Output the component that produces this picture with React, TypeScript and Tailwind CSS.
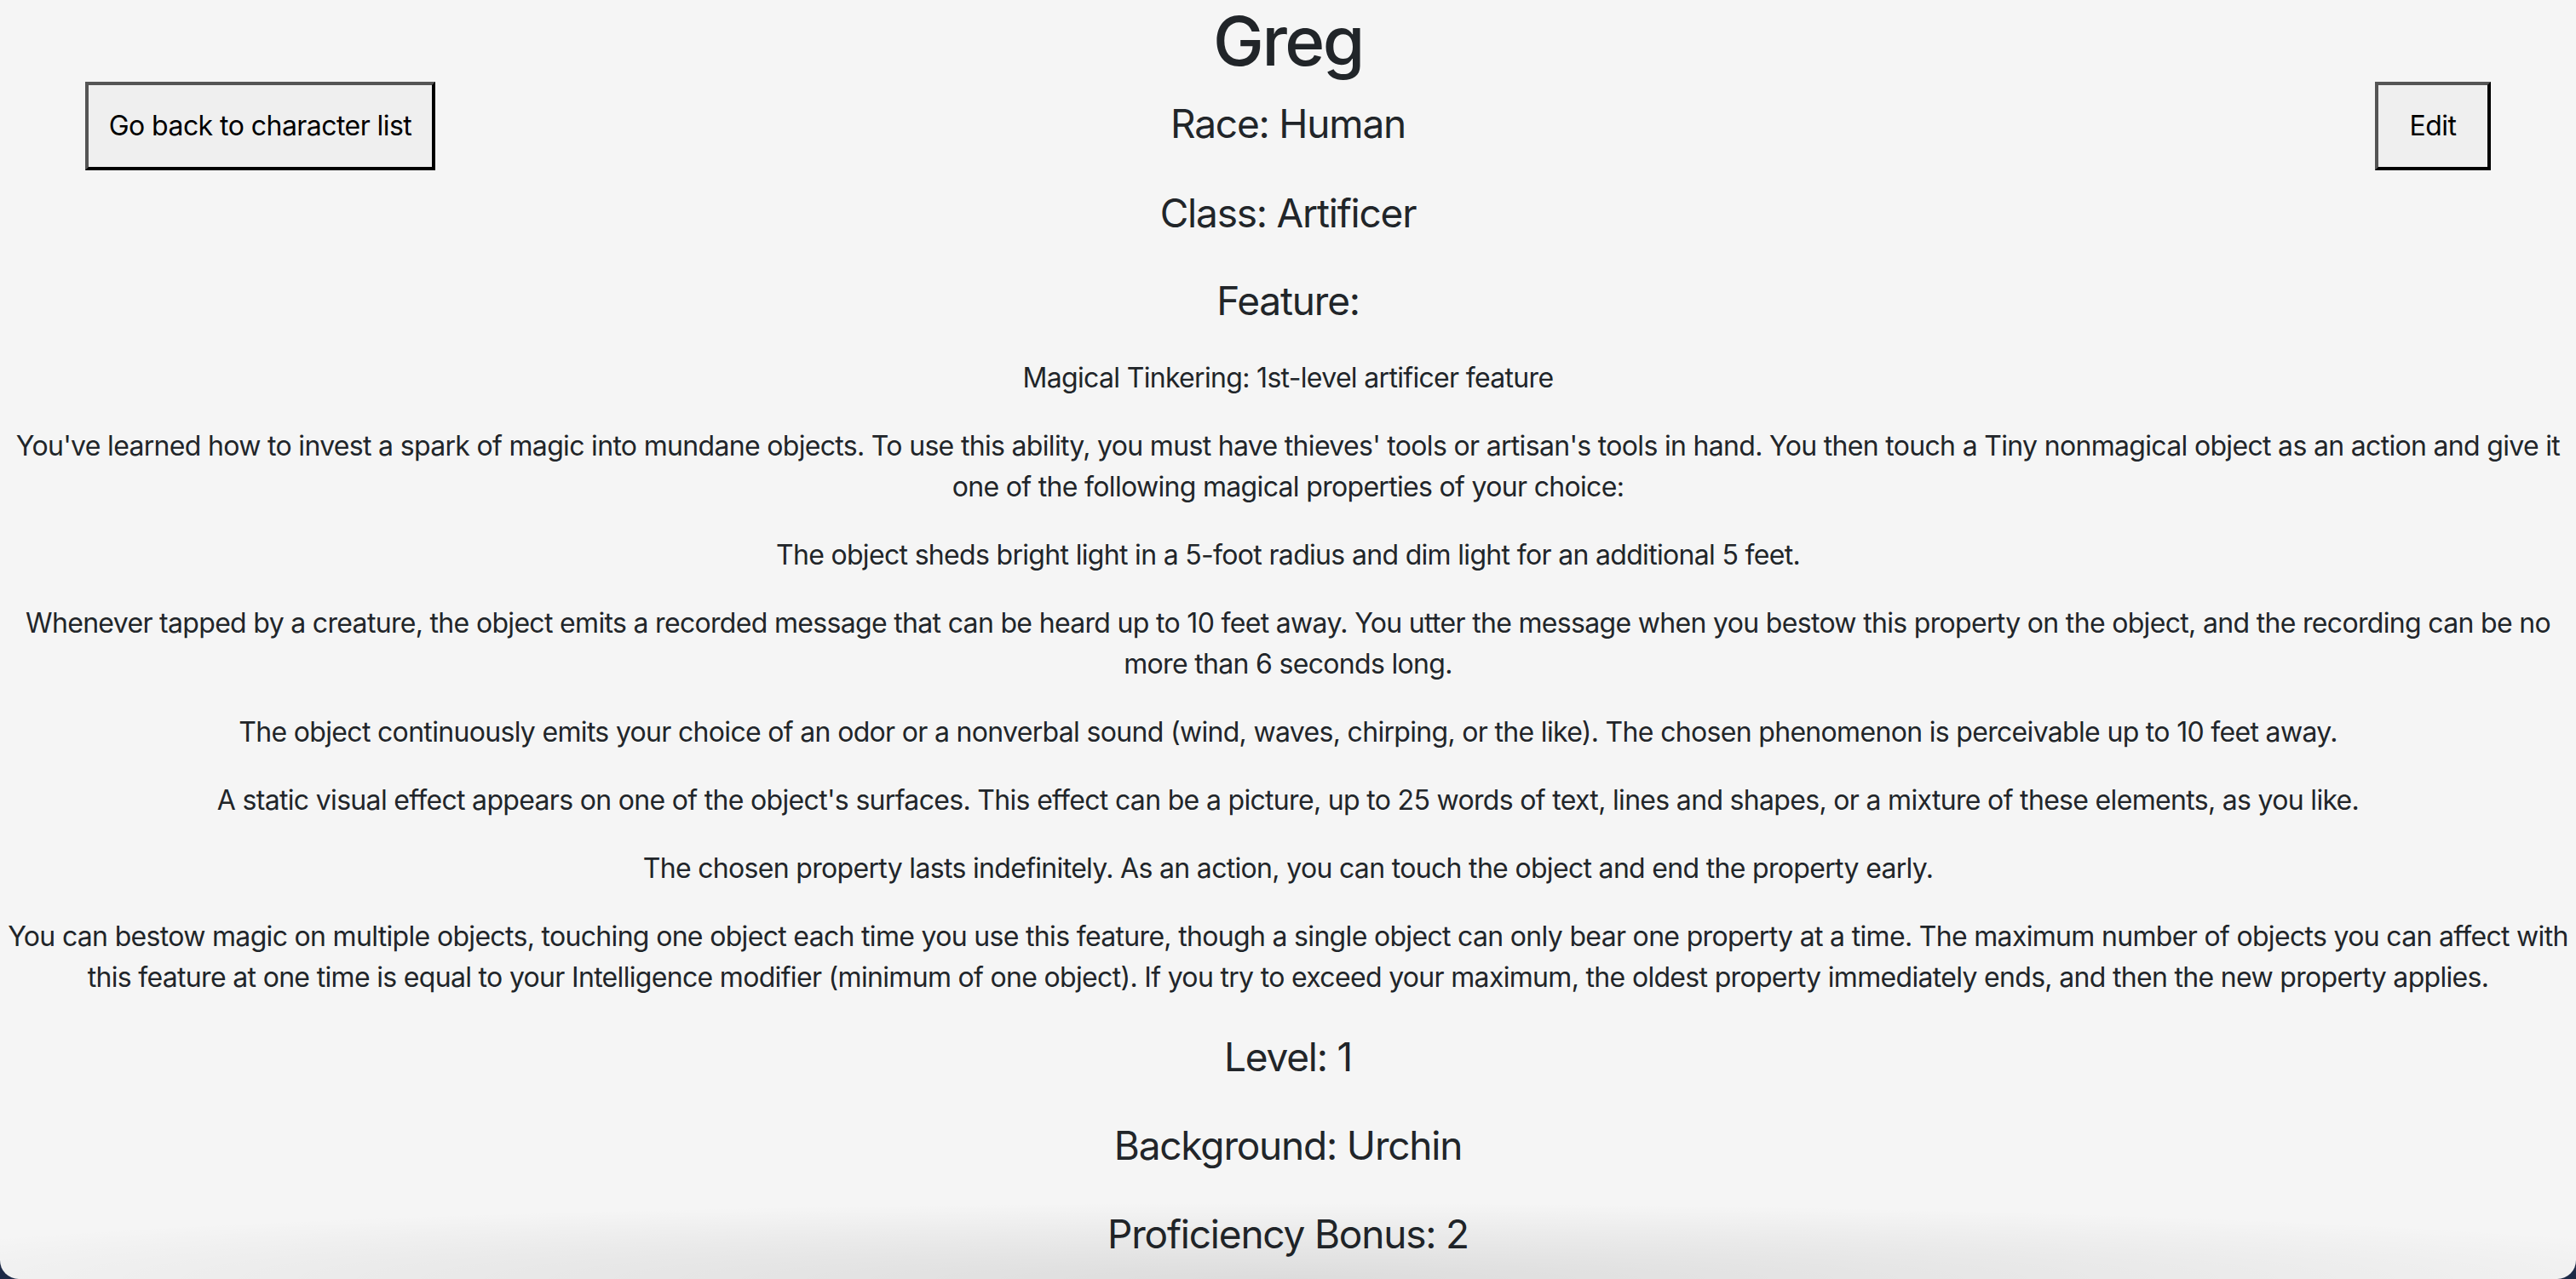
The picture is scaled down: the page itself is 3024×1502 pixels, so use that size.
import React from "react";

const paragraphs: string[] = [
  "Magical Tinkering: 1st-level artificer feature",
  "You've learned how to invest a spark of magic into mundane objects. To use this ability, you must have thieves' tools or artisan's tools in hand. You then touch a Tiny nonmagical object as an action and give it one of the following magical properties of your choice:",
  "The object sheds bright light in a 5-foot radius and dim light for an additional 5 feet.",
  "Whenever tapped by a creature, the object emits a recorded message that can be heard up to 10 feet away. You utter the message when you bestow this property on the object, and the recording can be no more than 6 seconds long.",
  "The object continuously emits your choice of an odor or a nonverbal sound (wind, waves, chirping, or the like). The chosen phenomenon is perceivable up to 10 feet away.",
  "A static visual effect appears on one of the object's surfaces. This effect can be a picture, up to 25 words of text, lines and shapes, or a mixture of these elements, as you like.",
  "The chosen property lasts indefinitely. As an action, you can touch the object and end the property early.",
  "You can bestow magic on multiple objects, touching one object each time you use this feature, though a single object can only bear one property at a time. The maximum number of objects you can affect with this feature at one time is equal to your Intelligence modifier (minimum of one object). If you try to exceed your maximum, the oldest property immediately ends, and then the new property applies.",
];

const btn =
  "h-[104px] bg-[#efefef] text-black text-[32px] leading-[40px] tracking-[-0.55px] border-[4px] border-t-[#555555] border-l-[#555555] border-b-black border-r-black flex items-center justify-center";

const h4 = "text-[46px] leading-[58px] font-normal tracking-[-1.2px]";

export default function App() {
  return (
    <div className="w-[3024px] h-[1502px] bg-[#1d2a47] overflow-hidden">
      <div
        className="relative w-full h-full bg-[#f5f5f5] rounded-b-[22px] overflow-hidden text-[#212529] text-center"
        style={{ fontFamily: "Inter, 'Noto Sans', sans-serif" }}
      >
        <h1 className="text-[80px] leading-[96px] font-medium tracking-[-2.5px]">Greg</h1>

        <div className="grid grid-cols-[1fr_auto_1fr] items-start">
          <div className="flex justify-start pl-[100px]">
            <button className={btn + " w-[411px]"}>Go back to character list</button>
          </div>
          <h4 className={h4 + " mt-[20px]"}>Race: Human</h4>
          <div className="flex justify-end pr-[100px]">
            <button className={btn + " w-[136px]"}>Edit</button>
          </div>
        </div>

        <h4 className={h4 + " mt-[21px] mb-[45px]"}>Class: Artificer</h4>
        <h4 className={h4 + " mb-[38px]"}>Feature:</h4>

        <div className="flex flex-col gap-[32px] mb-[40px]">
          {paragraphs.map((p, i) => (
            <p key={i} className="text-[32px] leading-[48px] tracking-[-0.68px]">
              {p}
            </p>
          ))}
        </div>

        <div className="flex flex-col gap-[46px]">
          <h4 className={h4}>Level: 1</h4>
          <h4 className={h4}>Background: Urchin</h4>
          <h4 className={h4}>Proficiency Bonus: 2</h4>
        </div>

        <div className="pointer-events-none absolute left-0 right-0 bottom-0 h-[90px] bg-[radial-gradient(ellipse_60%_100%_at_50%_100%,rgba(0,0,0,0.1),rgba(0,0,0,0.045)_60%,rgba(0,0,0,0)_100%)]" />
      </div>
    </div>
  );
}
